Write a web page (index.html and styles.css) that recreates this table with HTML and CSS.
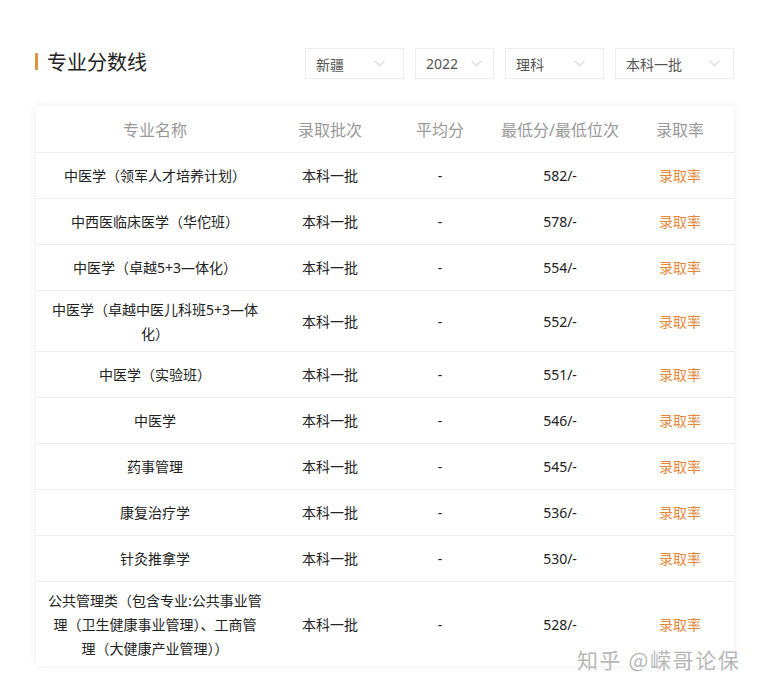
FILE: index.html
```html
<!DOCTYPE html>
<html lang="zh">
<head>
<meta charset="utf-8">
<link rel="stylesheet" href="styles.css">
</head>
<body>
<div class="page">
  <div class="topbar">
    <h2 class="title"><span class="bar"></span>专业分数线</h2>
    <div class="filters">
      <div class="select w99"><span>新疆</span><svg class="chev" width="11" height="7" viewBox="0 0 11 7"><polyline points="0.5,0.5 5.5,6 10.5,0.5" fill="none" stroke="#c8c8c8" stroke-width="1"/></svg></div>
      <div class="select w79"><span>2022</span><svg class="chev" width="11" height="7" viewBox="0 0 11 7"><polyline points="0.5,0.5 5.5,6 10.5,0.5" fill="none" stroke="#c8c8c8" stroke-width="1"/></svg></div>
      <div class="select w99"><span>理科</span><svg class="chev" width="11" height="7" viewBox="0 0 11 7"><polyline points="0.5,0.5 5.5,6 10.5,0.5" fill="none" stroke="#c8c8c8" stroke-width="1"/></svg></div>
      <div class="select w119"><span>本科一批</span><svg class="chev" width="11" height="7" viewBox="0 0 11 7"><polyline points="0.5,0.5 5.5,6 10.5,0.5" fill="none" stroke="#c8c8c8" stroke-width="1"/></svg></div>
    </div>
  </div>
  <div class="card">
    <table class="scores">
      <colgroup><col class="c1"><col class="c2"><col class="c3"><col class="c4"><col class="c5"></colgroup>
      <thead>
        <tr><th>专业名称</th><th>录取批次</th><th>平均分</th><th>最低分/最低位次</th><th>录取率</th></tr>
      </thead>
      <tbody>
        <tr><td class="name">中医学（领军人才培养计划）</td><td>本科一批</td><td>-</td><td>582/-</td><td class="link">录取率</td></tr>
        <tr><td class="name">中西医临床医学（华佗班）</td><td>本科一批</td><td>-</td><td>578/-</td><td class="link">录取率</td></tr>
        <tr><td class="name">中医学（卓越5+3—体化）</td><td>本科一批</td><td>-</td><td>554/-</td><td class="link">录取率</td></tr>
        <tr><td class="name">中医学（卓越中医儿科班5+3—体化）</td><td>本科一批</td><td>-</td><td>552/-</td><td class="link">录取率</td></tr>
        <tr><td class="name">中医学（实验班）</td><td>本科一批</td><td>-</td><td>551/-</td><td class="link">录取率</td></tr>
        <tr><td class="name">中医学</td><td>本科一批</td><td>-</td><td>546/-</td><td class="link">录取率</td></tr>
        <tr><td class="name">药事管理</td><td>本科一批</td><td>-</td><td>545/-</td><td class="link">录取率</td></tr>
        <tr><td class="name">康复治疗学</td><td>本科一批</td><td>-</td><td>536/-</td><td class="link">录取率</td></tr>
        <tr><td class="name">针灸推拿学</td><td>本科一批</td><td>-</td><td>530/-</td><td class="link">录取率</td></tr>
        <tr class="last"><td class="name">公共管理类（包含专业:公共事业管理（卫生健康事业管理）、工商管理（大健康产业管理））</td><td>本科一批</td><td>-</td><td>528/-</td><td class="link">录取率</td></tr>
      </tbody>
    </table>
  </div>
</div>
<div class="watermark">知乎 @嵘哥论保</div>
</body>
</html>
```

FILE: styles.css
```css
* { box-sizing: border-box; }
html, body { margin: 0; padding: 0; background: #fff; }
body {
  font-family: "Noto Sans", "Noto Sans CJK SC", sans-serif;
  color: #333;
  width: 758px;
  height: 691px;
  position: relative;
  overflow: hidden;
}
.page {
  padding: 48px 24px 0 35px;
  width: 758px;
}
.topbar {
  display: flex;
  justify-content: space-between;
  align-items: center;
  height: 31px;
}
.title {
  margin: 0;
  display: flex;
  align-items: center;
  font-family: "Noto Sans CJK SC", sans-serif;
  font-weight: 400;
  font-size: 20px;
  color: #222;
  margin-top: -4px;
}
.title .bar {
  display: inline-block;
  width: 3px;
  height: 17px;
  background: #e3913f;
  border-radius: 1px;
  margin-right: 9px;
}
.filters {
  display: flex;
  gap: 11px;
}
.select {
  height: 31px;
  border: 1px solid #ececec;
  display: flex;
  align-items: center;
  justify-content: space-between;
  padding: 0 13px 0 10px;
  font-size: 14px;
  color: #555;
  font-family: "Noto Sans", "Noto Sans CJK SC", sans-serif;
}
.select.w79 { width: 79px; padding-right: 11px; }
.select.w99 { width: 99px; padding-right: 18px; }
.select.w119 { width: 119px; }
.chev { display: block; }
.card {
  margin-top: 27px;
  margin-left: 1px;
  width: 698px;
  background: #fff;
  border-radius: 4px;
  box-shadow: 0 0 8px rgba(0, 0, 0, 0.08);
  overflow: hidden;
}
.scores {
  width: 100%;
  border-collapse: collapse;
  table-layout: fixed;
  font-size: 14px;
}
.c1 { width: 238px; }
.c2 { width: 112px; }
.c3 { width: 108px; }
.c4 { width: 132px; }
.c5 { width: 108px; }
.scores th {
  height: 46px;
  font-weight: 400;
  font-size: 16px;
  color: #999;
  text-align: center;
  border-bottom: 1px solid #eee;
  padding: 0;
}
.scores td {
  text-align: center;
  line-height: 24px;
  padding: 7px 11px 5px;
  color: #222;
  border-bottom: 1px solid #eee;
}
.scores tbody tr { height: 46px; }
.scores tr.last td { border-bottom: none; }
.scores td.link { color: #e8873a; }
.watermark {
  position: absolute;
  left: 577px;
  top: 644px;
  font-family: "Noto Sans CJK SC", sans-serif;
  font-size: 21px;
  color: rgba(150, 150, 150, 0.7);
  letter-spacing: 1.6px;
  white-space: nowrap;
  text-shadow: 0 0 1px #fff;
}
```
